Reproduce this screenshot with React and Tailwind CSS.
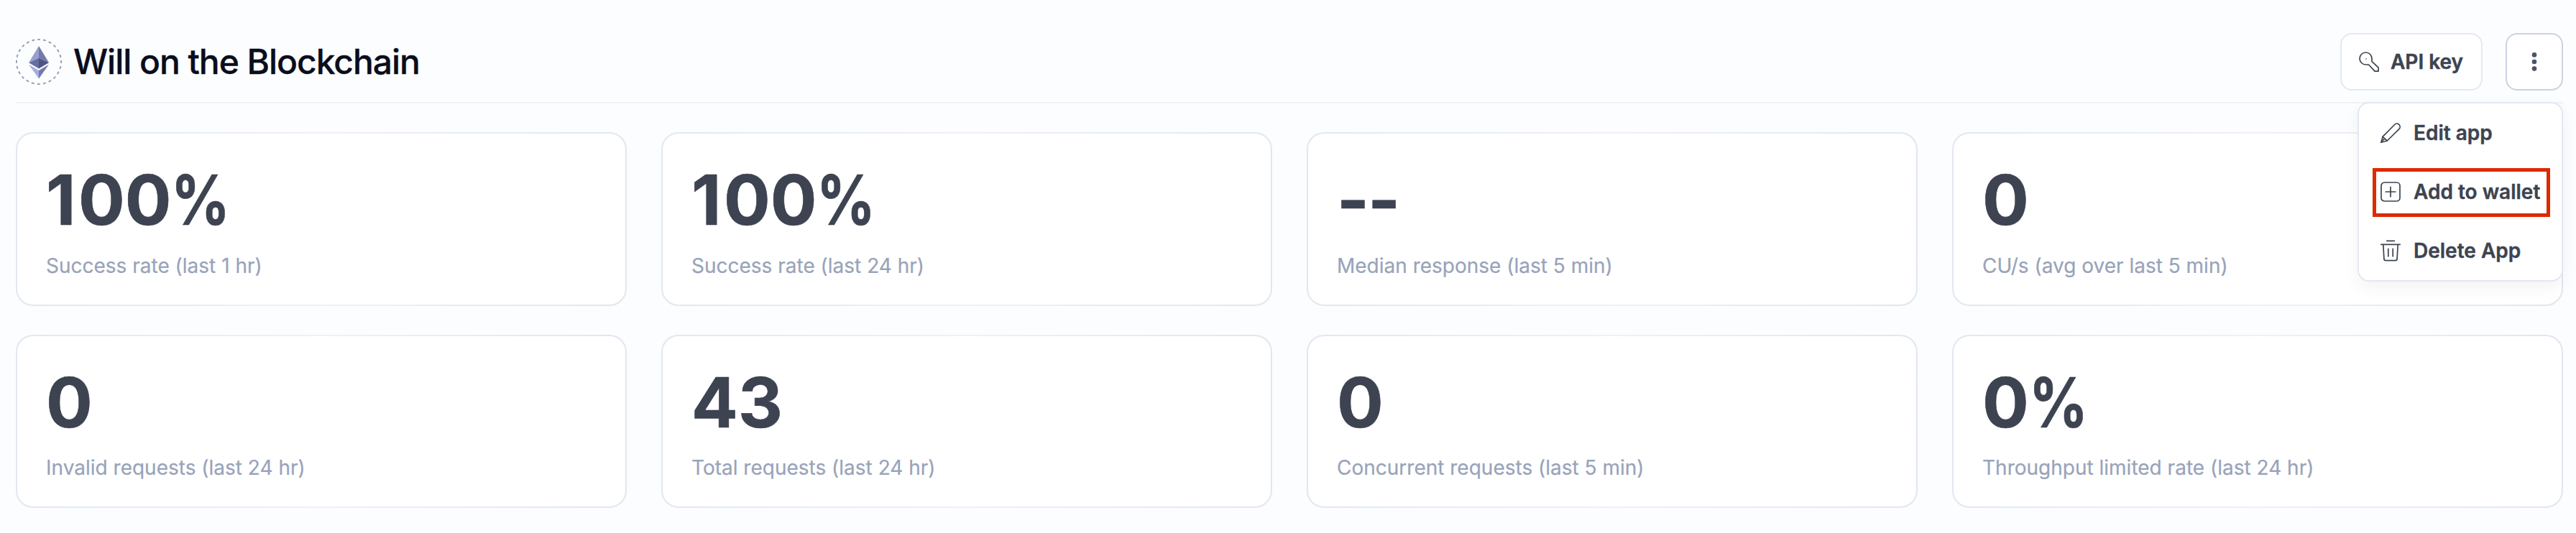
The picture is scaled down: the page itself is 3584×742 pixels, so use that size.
const stats = [
  ["100%", "Success rate (last 1 hr)"],
  ["100%", "Success rate (last 24 hr)"],
  ["--", "Median response (last 5 min)"],
  ["0", "CU/s (avg over last 5 min)"],
  ["0", "Invalid requests (last 24 hr)"],
  ["43", "Total requests (last 24 hr)"],
  ["0", "Concurrent requests (last 5 min)"],
  ["0%", "Throughput limited rate (last 24 hr)"],
];

const glyphClass = {
  "1": "mr-[3.6px]",
  "-": "-mr-[1.6px]",
  "%": "inline-block origin-left scale-x-[.84]",
};

function EthLogo() {
  return (
    <svg width="64" height="64" viewBox="0 0 64 64" className="shrink-0">
      <circle cx="32" cy="32" r="31" fill="none" stroke="#94a3b8" strokeWidth="2" strokeDasharray="4 4.116" strokeDashoffset="2" transform="rotate(-90 32 32)" />
      <path d="M32 10 18 33.3 32 26.8Z" fill="#989fce" />
      <path d="M32 10 46 33.3 32 26.8Z" fill="#7378a9" />
      <path d="M18 33.3 32 26.8V41.4Z" fill="#676ea0" />
      <path d="M46 33.3 32 26.8V41.4Z" fill="#4f5485" />
      <path d="M18 35.8 32 44V55.4Z" fill="#a5aede" />
      <path d="M46 35.8 32 44V55.4Z" fill="#757aab" />
    </svg>
  );
}

function Icon({ children }) {
  return (
    <svg width="28" height="28" viewBox="0 0 28 28" fill="none" stroke="#3d4350" strokeWidth="1.7" strokeLinecap="round" strokeLinejoin="round" className="shrink-0 overflow-visible">
      {children}
    </svg>
  );
}

const KeyIcon = () => (
  <Icon>
    <path d="M9.5 18H13.5L22 27.1H27.1V22.2L18 13.6V9.5A8.5 8.5 0 1 0 9.5 18Z" />
    <circle cx="10" cy="10" r=".8" fill="#3d4350" stroke="none" />
  </Icon>
);

const PencilIcon = () => (
  <Icon>
    <path d="M.9 27.2 3 19.4 19.6 2.5A4.3 4.3 0 0 1 25.9 8.6L9.2 25Z" />
    <path d="M3 19.4 9.2 25M.9 27.2 5.4 22" />
  </Icon>
);

const PlusIcon = () => (
  <Icon>
    <rect x="1" y="1" width="26" height="26" rx="4.5" />
    <path d="M14 7.4V20.8M7.3 14H20.8" />
  </Icon>
);

const TrashIcon = () => (
  <Icon>
    <path d="M8.8.3H19.4M.8 5.3H27.2M3.8 5.3 4.9 25.4A2.3 2.3 0 0 0 7.2 27.6H20.8A2.3 2.3 0 0 0 23.1 25.4L24.2 5.3M10.8 11.4V21.8M17.2 11.4V21.8" />
  </Icon>
);

const DotsIcon = () => (
  <svg width="28" height="28" viewBox="0 0 28 28" fill="#4b546a" className="shrink-0">
    <circle cx="14" cy="4.4" r="3.3" />
    <circle cx="14" cy="14" r="3.3" />
    <circle cx="14" cy="23.6" r="3.3" />
  </svg>
);

const menu = [
  { label: "Edit app", icon: PencilIcon },
  { label: "Add to wallet", icon: PlusIcon, marked: true },
  { label: "Delete App", icon: TrashIcon },
];

function StatCard({ value, label, second }) {
  return (
    <div className={`${second ? "h-[241px]" : "h-[242px]"} rounded-3xl border-2 border-transparent px-10 pt-11 [background:linear-gradient(#fff,#fff)_padding-box,linear-gradient(90deg,#e2e7f0,#eff1f6_50%,#e2e6f0)_border-box]`}>
      <div className="h-24 text-[96px] leading-[96px] font-bold whitespace-nowrap text-[#3d4350] [-webkit-text-stroke:0.6px_#3d4350]">
        {[...value].map((ch, i) => (
          <span key={i} className={glyphClass[ch]}>{ch}</span>
        ))}
      </div>
      <div className={`${second ? "mt-[23px]" : "mt-6"} text-[28px] leading-10 whitespace-nowrap text-[#98a3ba] [-webkit-text-stroke:0.2px_#98a3ba]`}>{label}</div>
    </div>
  );
}

export default function App() {
  return (
    <div className="h-[742px] w-full overflow-hidden bg-[#fcfdff] pr-[18px] pl-[22px] font-['Inter',sans-serif]">
      <header className="relative flex h-36 items-center justify-between border-b-2 border-[#f0f2f9] pt-[30px]">
        <div className="flex items-center gap-4">
          <EthLogo />
          <h1 className="text-[48px] leading-[64px] font-medium tracking-[-1.05px] text-[#0a0d1c] [-webkit-text-stroke:0.3px_#0a0d1c]">Will on the Blockchain</h1>
        </div>
        <div className="flex gap-8">
          <button className="flex h-20 w-[198px] items-center gap-4 rounded-2xl border-2 border-[#e4e8f2] bg-white pl-6 text-[28px] leading-10 font-semibold whitespace-nowrap text-[#3d4350] [-webkit-text-stroke:0.5px_#3d4350]">
            <KeyIcon />
            API key
          </button>
          <button aria-label="More options" className="flex size-20 items-center justify-center rounded-2xl border-2 border-[#cbd2e1] bg-white">
            <DotsIcon />
          </button>
        </div>
        <div className="absolute top-[142px] right-0 z-10 w-[286px] rounded-2xl border-2 border-[#e2e7f1] bg-white shadow-[0_8px_24px_rgba(15,23,42,0.05)]">
          {menu.map(({ label, icon: ItemIcon, marked }) => (
            <div key={label} className="relative flex h-[82px] items-center gap-[18px] pl-[30px] text-[28px] leading-10 font-semibold whitespace-nowrap text-[#3d4350] [-webkit-text-stroke:0.4px_#3d4350]">
              <ItemIcon />
              {label}
              {marked && <span className="absolute top-2 left-[19px] h-[68px] w-[247px] border-5 border-[#dc2a00]" />}
            </div>
          ))}
        </div>
      </header>
      <main className="mt-10 grid grid-cols-4 gap-x-12 gap-y-10">
        {stats.map(([value, label], i) => (
          <StatCard key={label} value={value} label={label} second={i > 3} />
        ))}
      </main>
    </div>
  );
}
